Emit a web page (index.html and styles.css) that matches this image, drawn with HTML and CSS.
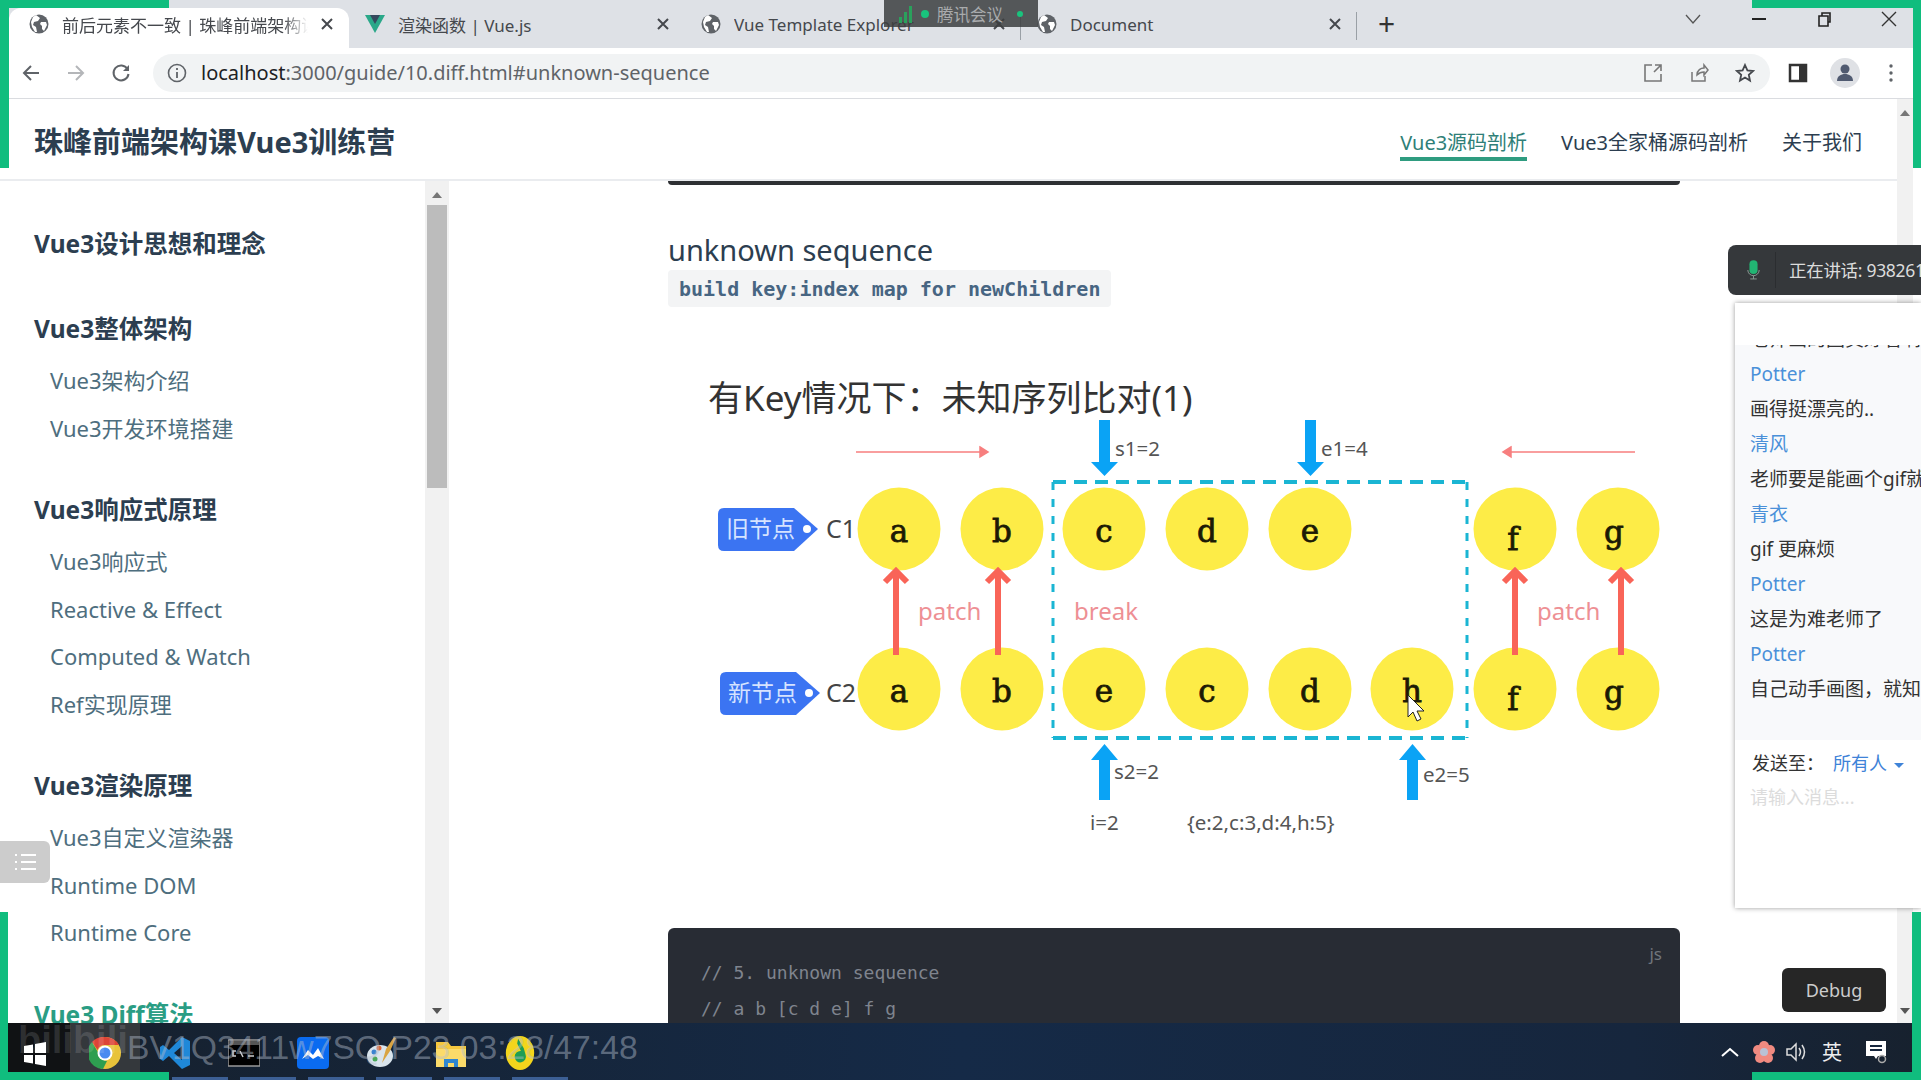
FILE: index.html
```html
<!DOCTYPE html>
<html lang="zh-CN">
<head>
    <meta charset="UTF-8">
    <meta name="viewport" content="width=device-width, initial-scale=1.0">
    <title>前后元素不一致 | 珠峰前端架构课</title>
    <link rel="stylesheet" href="styles.css">
</head>
<body>
    <svg class="defs" width="0" height="0">
        <symbol id="globe" viewBox="0 0 20 20">
            <circle cx="10" cy="10" r="9.5" fill="#5f6368"/>
            <path d="M7 1l4 3-2 3-4 1-1 3 3 2 1 5-2 0-3-5-1-5 2-5zM12 8l5 0 1 3-3 6-2-2 0-3-2-2z" fill="#fff"/>
        </symbol>
        <symbol id="close" viewBox="0 0 14 14">
            <path d="M2 2l10 10M12 2L2 12" fill="none" stroke="#45484d" stroke-width="2"/>
        </symbol>
    </svg>

    <div class="tabbar">
        <div class="tab active">
            <svg class="favicon"><use href="#globe"/></svg>
            <span class="tab-title">前后元素不一致 | 珠峰前端架构课</span>
            <svg class="tab-close"><use href="#close"/></svg>
        </div>
        <div class="tab">
            <svg class="favicon" viewBox="0 0 20 20">
                <path d="M0 1h20L10 19z" fill="#2aa889"/>
                <path d="M5 1h10l-5 9z" fill="#35495e"/>
            </svg>
            <span class="tab-title">渲染函数 | Vue.js</span>
            <svg class="tab-close"><use href="#close"/></svg>
        </div>
        <div class="tab">
            <svg class="favicon"><use href="#globe"/></svg>
            <span class="tab-title">Vue Template Explorer</span>
            <svg class="tab-close"><use href="#close"/></svg>
        </div>
        <div class="tab">
            <svg class="favicon"><use href="#globe"/></svg>
            <span class="tab-title">Document</span>
            <svg class="tab-close"><use href="#close"/></svg>
        </div>
        <span class="newtab">+</span>
        <div class="winbtns">
            <svg class="chevron" viewBox="0 0 16 10"><path d="M1 1l7 8 7-8" fill="none" stroke="#555" stroke-width="1.3"/></svg>
            <svg class="winbtn" viewBox="0 0 16 16"><path d="M1 8h14" stroke="#222" stroke-width="2"/></svg>
            <svg class="winbtn" viewBox="0 0 16 16"><path d="M3 5h9v10H3zM6 5V2h8v9h-2" fill="none" stroke="#222" stroke-width="1.6"/></svg>
            <svg class="winbtn" viewBox="0 0 16 16"><path d="M1 1l14 14M15 1L1 15" stroke="#333" stroke-width="1.4"/></svg>
        </div>
    </div>

    <div class="toolbar">
        <svg class="navicon" viewBox="0 0 20 20"><path d="M18 10H3M10 3l-7 7 7 7" fill="none" stroke="#5f6368" stroke-width="2"/></svg>
        <svg class="navicon" viewBox="0 0 20 20"><path d="M2 10h15M10 3l7 7-7 7" fill="none" stroke="#b4b6b9" stroke-width="2"/></svg>
        <svg class="navicon" viewBox="0 0 20 20"><path d="M16.5 6A7.5 7.5 0 1 0 17.5 11" fill="none" stroke="#5f6368" stroke-width="2"/><path d="M18 2v6h-6z" fill="#5f6368"/></svg>
        <div class="omnibox">
            <svg class="info" viewBox="0 0 20 20"><circle cx="10" cy="10" r="8.5" fill="none" stroke="#5f6368" stroke-width="1.6"/><path d="M10 9v6M10 5v2" stroke="#5f6368" stroke-width="1.8"/></svg>
            <span class="url"><b>localhost</b>:3000/guide/10.diff.html#unknown-sequence</span>
            <svg class="omni-icon" viewBox="0 0 20 20"><path d="M9 2H2v16h16v-7M11 9l7-7M12 2h6v6" fill="none" stroke="#777" stroke-width="1.6"/></svg>
            <svg class="omni-icon" viewBox="0 0 20 20"><path d="M3 9v9h13v-5M8 12c0-5 4-7 7-7V2l4 5-4 5V9c-3 0-5 1-7 3z" fill="none" stroke="#777" stroke-width="1.5"/></svg>
            <svg class="omni-icon" viewBox="0 0 20 20"><path d="M10 2l2.4 5.4 5.6.6-4.200 3.800 1.200 5.800-5-3-5 3 1.200-5.800L2 8l5.600-.6z" fill="none" stroke="#45484d" stroke-width="1.8"/></svg>
        </div>
        <svg class="panel-icon" viewBox="0 0 20 20"><path d="M2 2h16v16H2z" fill="none" stroke="#333" stroke-width="2.500"/><path d="M11 2h7v16h-7z" fill="#333"/></svg>
        <svg class="avatar" viewBox="0 0 30 30"><circle cx="15" cy="15" r="15" fill="#dfe1e5"/><circle cx="15" cy="11" r="4.500" fill="#505a70"/><path d="M7 23c0-5 4-7 8-7s8 2 8 7z" fill="#505a70"/></svg>
        <svg class="dots" viewBox="0 0 6 20"><circle cx="3" cy="3" r="1.700" fill="#5f6368"/><circle cx="3" cy="10" r="1.700" fill="#5f6368"/><circle cx="3" cy="17" r="1.700" fill="#5f6368"/></svg>
    </div>

    <div class="site">
        <div class="site-body">
            <header class="site-head">
                <div class="site-title">珠峰前端架构课Vue3训练营</div>
                <nav class="site-nav">
                    <a class="current">Vue3源码剖析</a>
                    <a>Vue3全家桶源码剖析</a>
                    <a>关于我们</a>
                </nav>
            </header>

            <div class="site-main">
                <aside class="sidebar">
                    <div class="sidebar-list">
                        <section class="group lone"><h3>Vue3设计思想和理念</h3></section>
                        <section class="group">
                            <h3>Vue3整体架构</h3>
                            <a>Vue3架构介绍</a>
                            <a>Vue3开发环境搭建</a>
                        </section>
                        <section class="group">
                            <h3>Vue3响应式原理</h3>
                            <a>Vue3响应式</a>
                            <a>Reactive &amp; Effect</a>
                            <a>Computed &amp; Watch</a>
                            <a>Ref实现原理</a>
                        </section>
                        <section class="group">
                            <h3>Vue3渲染原理</h3>
                            <a>Vue3自定义渲染器</a>
                            <a>Runtime DOM</a>
                            <a>Runtime Core</a>
                        </section>
                        <section class="group"><h3 class="active">Vue3 Diff算法</h3></section>
                    </div>
                    <div class="scrollbar side-scroll">
                        <span class="arrow-up"></span>
                        <span class="thumb"></span>
                        <span class="arrow-down"></span>
                    </div>
                </aside>

                <main class="content">
                    <div class="code-end"></div>
                    <h2>unknown sequence</h2>
                    <code class="inline-code">build key:index map for newChildren</code>

                    <svg class="diagram" viewBox="668 340 1012 588">
                        <text class="d-title" x="708" y="411">有Key情况下&#xFF1A;未知序列比对(1)</text>

                        <!-- scan direction -->
                        <path class="scan" d="M856 452H987M980 447l8 5-8 5z"/>
                        <path class="scan" d="M1635 452H1504M1511 447l-8 5 8 5z"/>

                        <!-- tags -->
                        <path class="tag" d="M724 508h70l24 21-24 22h-70q-6 0-6-6v-31q0-6 6-6z"/>
                        <circle class="tag-dot" cx="807" cy="529" r="4"/>
                        <text class="tag-text" x="726" y="537">旧节点</text>
                        <path class="tag" d="M726 672h70l24 21-24 22h-70q-6 0-6-6v-31q0-6 6-6z"/>
                        <circle class="tag-dot" cx="809" cy="693" r="4"/>
                        <text class="tag-text" x="728" y="701">新节点</text>
                        <text class="d-label big" x="826" y="538">C1</text>
                        <text class="d-label big" x="826" y="702">C2</text>

                        <!-- box -->
                        <path class="box-h" d="M1053 482H1467M1053 738H1467"/>
                        <path class="box-v" d="M1053 482V738M1467 482V738"/>

                        <!-- old row -->
                        <g class="node">
                            <circle cx="899" cy="529" r="41.500"/><text x="899" y="542">a</text>
                            <circle cx="1002" cy="529" r="41.500"/><text x="1002" y="542">b</text>
                            <circle cx="1104" cy="529" r="41.500"/><text x="1104" y="542">c</text>
                            <circle cx="1207" cy="529" r="41.500"/><text x="1207" y="542">d</text>
                            <circle cx="1310" cy="529" r="41.500"/><text x="1310" y="542">e</text>
                            <circle cx="1515" cy="529" r="41.500"/><text x="1513" y="550">f</text>
                            <circle cx="1618" cy="529" r="41.500"/><text x="1614" y="543">g</text>
                        </g>
                        <!-- new row -->
                        <g class="node">
                            <circle cx="899" cy="689" r="41.500"/><text x="899" y="702">a</text>
                            <circle cx="1002" cy="689" r="41.500"/><text x="1002" y="702">b</text>
                            <circle cx="1104" cy="689" r="41.500"/><text x="1104" y="702">e</text>
                            <circle cx="1207" cy="689" r="41.500"/><text x="1207" y="702">c</text>
                            <circle cx="1310" cy="689" r="41.500"/><text x="1310" y="702">d</text>
                            <circle cx="1412" cy="689" r="41.500"/><text x="1412" y="702">h</text>
                            <circle cx="1515" cy="689" r="41.500"/><text x="1513" y="710">f</text>
                            <circle cx="1618" cy="689" r="41.500"/><text x="1614" y="703">g</text>
                        </g>

                        <!-- patch arrows -->
                        <path class="patch-arrow" d="M896 655V572M885 582l11-11 11 11"/>
                        <path class="patch-arrow" d="M998 655V572M987 582l11-11 11 11"/>
                        <path class="patch-arrow" d="M1515 655V572M1504 582l11-11 11 11"/>
                        <path class="patch-arrow" d="M1621 655V572M1610 582l11-11 11 11"/>
                        <text class="d-red" x="918" y="620">patch</text>
                        <text class="d-red" x="1074" y="620">break</text>
                        <text class="d-red" x="1537" y="620">patch</text>

                        <!-- pointers -->
                        <path class="pointer" d="M1099 420h11v42h8l-13.500 14-13.500-14h8z"/>
                        <path class="pointer" d="M1305 420h11v42h8l-13.500 14-13.500-14h8z"/>
                        <path class="pointer" d="M1099 800h11v-40h8l-13.500-16-13.500 16h8z"/>
                        <path class="pointer" d="M1407 800h11v-40h8l-13.500-16-13.500 16h8z"/>
                        <text class="d-label" x="1115" y="456">s1=2</text>
                        <text class="d-label" x="1321" y="456">e1=4</text>
                        <text class="d-label" x="1114" y="779">s2=2</text>
                        <text class="d-label" x="1423" y="782">e2=5</text>
                        <text class="d-label" x="1090" y="830">i=2</text>
                        <text class="d-label" x="1187" y="830">{e:2,c:3,d:4,h:5}</text>

                        <!-- mouse -->
                        <path class="mouse" d="M1408 695v22l5-5 4 9 4-2-4-8h7z"/>
                    </svg>

                    <pre class="code-block"><span class="lang">js</span>// 5. unknown sequence
// a b [c d e] f g</pre>
                </main>
            </div>
        </div>

        <div class="scrollbar page-scroll">
            <span class="arrow-up"></span>
            <span class="arrow-down"></span>
        </div>
    </div>

    <footer class="taskbar">
        <span class="bili">bilibili</span>
        <span class="video-id">BV1Q3411w7SQ P23 03:28/47:48</span>
        <div class="start">
            <svg class="winlogo" viewBox="0 0 24 24"><path d="M1 4l9-1.500V11H1zM12 2l11-2v11H12zM1 13h9v8.500L1 20zM12 13h11v11l-11-2z" fill="#fff"/></svg>
        </div>
        <div class="task hovered">
            <svg class="task-icon" viewBox="0 0 32 32">
                <circle cx="16" cy="16" r="16" fill="#e8c33a"/>
                <path d="M16 0a16 16 0 0 1 14 8H16a8 8 0 0 0-7.500 5L3 5a16 16 0 0 1 13-5z" fill="#dc4437"/>
                <path d="M3 5l7 12a8 8 0 0 0 8 7l-4 8A16 16 0 0 1 3 5z" fill="#2e9e50"/>
                <circle cx="16" cy="16" r="7.500" fill="#fff"/><circle cx="16" cy="16" r="5.500" fill="#4a8bf0"/>
            </svg>
        </div>
        <div class="task">
            <svg class="task-icon" viewBox="0 0 32 32"><path d="M23 0l8 4v24l-8 4L10 19l-6 5-3-2V10l3-2 6 5zM23 9l-8 7 8 7z" fill="#1f88d8"/></svg>
        </div>
        <div class="task">
            <svg class="task-icon" viewBox="0 0 32 32"><path d="M0 3h32v26H0z" fill="#000" stroke="#999" stroke-width="1.500"/><path d="M1 4h30v4H1z" fill="#555"/><path d="M8 14H5v5h3M12 14l3 6M20 19h6" fill="none" stroke="#ccc" stroke-width="1.500"/></svg>
        </div>
        <div class="task">
            <svg class="task-icon" viewBox="0 0 32 32"><rect width="32" height="32" rx="4" fill="#0a6bf0"/><path d="M5 22l6-9 5 5 5-7 6 11-6-3-5 3-5-4z" fill="#fff"/></svg>
        </div>
        <div class="task">
            <svg class="task-icon" viewBox="0 0 32 32"><ellipse cx="14" cy="19" rx="13" ry="11" fill="#d9e4ec"/><circle cx="8" cy="15" r="2.500" fill="#3b82d0"/><circle cx="13" cy="11" r="2.500" fill="#e4663a"/><circle cx="9" cy="22" r="2.500" fill="#49a85a"/><path d="M16 26l4-14 8-12 2 1-6 13z" fill="#d9a441"/></svg>
        </div>
        <div class="task">
            <svg class="task-icon" viewBox="0 0 32 32"><path d="M1 5h12l3 4h15v21H1z" fill="#f4c73e"/><path d="M1 12h30v18H1z" fill="#fbdb6a"/><path d="M9 30v-8h14v8h-4v-4h-6v4z" fill="#2f86d1"/></svg>
        </div>
        <div class="task">
            <svg class="task-icon" viewBox="0 0 32 36"><ellipse cx="16" cy="18" rx="15" ry="18" fill="#f3d51c"/><path d="M14 3l6 10 2 7a6 6 0 1 1-5-4l-4-8z" fill="#1f9d55"/></svg>
        </div>

        <div class="tray">
            <svg class="tray-chevron" viewBox="0 0 18 10"><path d="M1 9l8-7 8 7" fill="none" stroke="#fff" stroke-width="2"/></svg>
            <svg class="tray-flower" viewBox="0 0 22 22"><g fill="#f08a80"><circle cx="11" cy="5" r="5"/><circle cx="17" cy="9" r="5"/><circle cx="15" cy="17" r="5"/><circle cx="7" cy="17" r="5"/><circle cx="5" cy="9" r="5"/></g><circle cx="11" cy="11" r="4" fill="#b9c2d6"/></svg>
            <svg class="tray-sound" viewBox="0 0 24 20"><path d="M2 7h4l5-5v16l-5-5H2z" fill="none" stroke="#ddd" stroke-width="1.500"/><path d="M14 6q3 4 0 8M17 3q5 7 0 14" fill="none" stroke="#ddd" stroke-width="1.500"/></svg>
            <span class="tray-ime">英</span>
            <svg class="tray-note" viewBox="0 0 24 24"><path d="M2 1h20v15h-8l-2 3-2-3H2z" fill="#fff"/><path d="M6 6h12M6 10h12" stroke="#16263d" stroke-width="1.800"/><circle cx="18" cy="19" r="3.500" fill="none" stroke="#aaa" stroke-width="1.500"/></svg>
        </div>

        <div class="seekbar">
            <i></i><i></i><i></i><i></i><i></i><i></i>
        </div>
    </footer>

    <!-- things floating over the page -->
    <div class="meeting">
        <svg class="meeting-bars" viewBox="0 0 14 18"><path d="M1 12h3v6H1zM6 7h3v11H6zM11 1h3v17h-3z" fill="#2aa05c"/></svg>
        <i class="meeting-dot"></i>
        <span>腾讯会议</span>
        <i class="meeting-dot small"></i>
    </div>

    <button class="toc-toggle">
        <svg viewBox="0 0 24 20"><path d="M7 3h15M7 10h15M7 17h15" stroke="#fff" stroke-width="2"/><path d="M1 3h2M1 10h2M1 17h2" stroke="#fff" stroke-width="2"/></svg>
    </button>

    <div class="speaking">
        <svg class="mic" viewBox="0 0 16 24"><rect x="3" y="0" width="10" height="17" rx="5" fill="#22b573"/><path d="M1 12a7 7 0 0 0 14 0M8 19v4M4 23h8" fill="none" stroke="#8a9a94" stroke-width="1.200"/></svg>
        <span class="speaking-text">正在讲话: 938261</span>
    </div>

    <div class="chat">
        <div class="chat-top"></div>
        <div class="chat-list">
            <div class="msg cut">老师画的图真好看啊</div>
            <div class="who">Potter</div>
            <div class="msg">画得挺漂亮的..</div>
            <div class="who">清风</div>
            <div class="msg">老师要是能画个gif就好了</div>
            <div class="who">青衣</div>
            <div class="msg">gif 更麻烦</div>
            <div class="who">Potter</div>
            <div class="msg">这是为难老师了</div>
            <div class="who">Potter</div>
            <div class="msg">自己动手画图&#xFF0C;就知道了</div>
        </div>
        <div class="chat-send">
            <div class="send-to"><span>发送至&#xFF1A;</span><a>所有人 <i class="caret"></i></a></div>
            <div class="placeholder">请输入消息...</div>
        </div>
    </div>

    <button class="debug">Debug</button>

    <div class="corner tl"></div>
    <div class="corner tr"></div>
    <div class="corner bl"></div>
    <div class="corner br"></div>
</body>
</html>
```
FILE: styles.css
```css
* {
  box-sizing: border-box;
}

body {
  margin: 0;
  width: 1921px;
  height: 1080px;
  overflow: hidden;
  display: flex;
  flex-direction: column;
  font-family: "Noto Sans", "Noto Sans CJK SC", sans-serif;
  color: #2c3e50;
  background: #fff;
}

.defs {
  position: absolute;
}

/* browser chrome */
.tabbar {
  height: 48px;
  flex: none;
  display: flex;
  align-items: flex-end;
  background: #dee1e6;
  padding-left: 13px;
  color: #45484d;
}

.tab {
  position: relative;
  width: 336px;
  height: 40px;
  display: flex;
  align-items: center;
  padding: 0 15px 8px 16px;
  font-size: 17px;
}

.tab::after {
  content: "";
  position: absolute;
  right: 0;
  top: 4px;
  height: 28px;
  width: 1px;
  background: #9aa0a6;
}

.tab.active {
  width: 340px;
  margin-left: -4px;
  padding-left: 20px;
  background: #fff;
  border-radius: 12px 12px 0 0;
}

.tab.active::after {
  display: none;
}

.tab:nth-child(2)::after {
  display: none;
}

.favicon {
  width: 20px;
  height: 20px;
  flex: none;
}

.tab-title {
  flex: 1;
  margin-left: 13px;
  white-space: nowrap;
  overflow: hidden;
}

.tab.active .tab-title {
  -webkit-mask-image: linear-gradient(90deg, #000 90%, transparent);
  mask-image: linear-gradient(90deg, #000 90%, transparent);
}

.tab-close {
  width: 14px;
  height: 14px;
  flex: none;
  margin-left: 12px;
}

.newtab {
  margin: 0 0 6px 21px;
  font-size: 30px;
  line-height: 36px;
  color: #333;
}

.winbtns {
  margin-left: auto;
  display: flex;
  align-items: center;
  height: 48px;
  padding: 0 24px 10px 0;
}

.chevron {
  width: 16px;
  height: 10px;
  margin-right: 50px;
}

.winbtn {
  width: 16px;
  height: 16px;
  margin-left: 49px;
}

.chevron + .winbtn {
  margin-left: 0;
}

.toolbar {
  height: 51px;
  flex: none;
  display: flex;
  align-items: center;
  padding: 0 22px 0 21px;
  background: #fff;
  border-bottom: 1px solid #dadce0;
}

.navicon {
  width: 20px;
  height: 20px;
  margin-right: 25px;
}

.navicon:nth-child(3) {
  margin-right: 22px;
}

.omnibox {
  width: 1617px;
  height: 38px;
  display: flex;
  align-items: center;
  padding: 0 15px;
  border-radius: 19px;
  background: #f1f3f4;
}

.info {
  width: 20px;
  height: 20px;
  margin-left: -1px;
}

.url {
  flex: 1;
  margin: -2px 0 0 14px;
  font-size: 20px;
  color: #5f6368;
  white-space: nowrap;
}

.url b {
  font-weight: 400;
  color: #202124;
}

.omni-icon {
  width: 20px;
  height: 20px;
  margin-left: 26px;
}

.panel-icon {
  width: 20px;
  height: 20px;
  margin-left: 18px;
}

.avatar {
  width: 30px;
  height: 30px;
  margin-left: 22px;
}

.dots {
  width: 6px;
  height: 20px;
  margin-left: 28px;
}

/* the docs site */
.site {
  height: 924px;
  flex: none;
  display: flex;
}

.site-body {
  flex: 1;
  min-width: 0;
  display: flex;
  flex-direction: column;
}

.site-head {
  height: 82px;
  flex: none;
  display: flex;
  align-items: center;
  justify-content: space-between;
  padding: 2px 35px 0 34px;
  border-bottom: 2px solid #eaecef;
}

.site-title {
  font-size: 29px;
  font-weight: 700;
}

.site-nav {
  display: flex;
  gap: 34px;
  margin-top: 3px;
  font-size: 20px;
}

.site-nav a {
  padding: 4px 0 1px;
  border-bottom: 4px solid transparent;
  color: #2c3e50;
}

.site-nav a.current {
  color: #2f7f78;
  border-bottom-color: #2f9c80;
}

.site-main {
  flex: 1;
  min-height: 0;
  display: flex;
}

.sidebar {
  width: 449px;
  flex: none;
  display: flex;
  overflow: hidden;
}

.sidebar-list {
  flex: 1;
  padding: 46px 0 0 34px;
}

.group {
  margin-bottom: 41px;
}

.group.lone {
  margin-bottom: 51px;
}

.group h3 {
  margin: 0 0 11px;
  font-size: 24.5px;
  line-height: 34px;
  font-weight: 700;
}

.group h3.active {
  color: #2a9d84;
}

.group a {
  display: block;
  height: 47.5px;
  line-height: 47.5px;
  padding-left: 16px;
  font-size: 22px;
  color: #4e6e7e;
}

.scrollbar {
  position: relative;
  flex: none;
  background: #f1f1f1;
}

.side-scroll {
  width: 24px;
}

.page-scroll {
  width: 16px;
  margin-right: 8px;
}

.thumb {
  position: absolute;
  top: 24px;
  left: 2px;
  right: 2px;
  height: 283px;
  background: #bcbcbc;
}

.arrow-up,
.arrow-down {
  position: absolute;
  left: 50%;
  margin-left: -5px;
  border: 5px solid transparent;
}

.arrow-up {
  top: 6px;
  border-bottom: 6px solid #777;
}

.arrow-down {
  bottom: 4px;
  border-top: 6px solid #555;
}

.content {
  flex: 1;
  min-width: 0;
  overflow: hidden;
  padding-left: 219px;
}

.code-end {
  width: 1012px;
  height: 4px;
  background: #2e3033;
  border-radius: 0 0 6px 6px;
}

.content h2 {
  margin: 46px 0 2px;
  font-size: 29px;
  line-height: 38px;
  font-weight: 400;
  color: #2c3e50;
}

.inline-code {
  display: inline-block;
  vertical-align: top;
  height: 37px;
  margin-top: -1px;
  padding: 0 11px;
  border-radius: 4px;
  background: #f3f4f5;
  font-family: "DejaVu Sans Mono", monospace;
  font-size: 20px;
  line-height: 38px;
  font-weight: 700;
  color: #476582;
}

.diagram {
  display: block;
  width: 1012px;
  height: 588px;
  margin-top: 33px;
}

.d-title {
  font-size: 35px;
  fill: #333;
}

.scan {
  fill: #f77f7f;
  stroke: #f77f7f;
  stroke-width: 1.5;
}

.tag {
  fill: #3b74f2;
}

.tag-dot {
  fill: #fff;
}

.tag-text {
  font-size: 23px;
  fill: #d6e3ff;
}

.d-label {
  font-size: 20.5px;
  fill: #555;
}

.d-label.big {
  font-size: 25px;
  fill: #444;
}

.box-h {
  fill: none;
  stroke: #1ab5d3;
  stroke-width: 4;
  stroke-dasharray: 13 8;
}

.box-v {
  fill: none;
  stroke: #1ab5d3;
  stroke-width: 3;
  stroke-dasharray: 8 9;
}

.node circle {
  fill: #fdec47;
}

.node text {
  font-family: "DejaVu Serif", serif;
  font-size: 31px;
  text-anchor: middle;
  fill: #1c1a05;
  stroke: #1c1a05;
  stroke-width: 0.8;
}

.patch-arrow {
  fill: none;
  stroke: #f96458;
  stroke-width: 6;
}

.d-red {
  font-size: 24px;
  fill: #ee8f94;
}

.pointer {
  fill: #0aa3f5;
}

.mouse {
  fill: #fff;
  stroke: #222;
  stroke-width: 1;
}

.code-block {
  position: relative;
  width: 1012px;
  height: 120px;
  margin: 0;
  padding: 27px 33px;
  border-radius: 6px;
  background: #282c34;
  font-family: "DejaVu Sans Mono", monospace;
  font-size: 18px;
  line-height: 36px;
  color: #7f848e;
}

.lang {
  position: absolute;
  top: 8px;
  right: 18px;
  font-size: 17px;
  font-family: "Noto Sans", sans-serif;
  color: #70757c;
}

/* windows taskbar */
.taskbar {
  position: relative;
  height: 57px;
  flex: none;
  display: flex;
  align-items: flex-start;
  padding-left: 8px;
  background: linear-gradient(90deg, #16202c, #152a47 50%, #16263d 85%, #17212e);
  overflow: hidden;
}

.start {
  width: 62px;
  height: 49px;
  display: flex;
  align-items: center;
  justify-content: center;
  padding-right: 8px;
  background: #101214;
}

.winlogo {
  width: 24px;
  height: 24px;
  margin-top: 13px;
}

.task {
  width: 69px;
  height: 49px;
  display: flex;
  align-items: center;
  justify-content: center;
  padding-top: 10px;
}

.task.hovered {
  width: 70px;
  background: #34383c;
}

.task-icon {
  width: 32px;
  height: 34px;
}

.bili {
  position: absolute;
  left: 18px;
  top: -4px;
  z-index: 1;
  font-family: "Liberation Sans", sans-serif;
  font-size: 38px;
  font-weight: 700;
  color: rgba(255, 255, 255, 0.13);
}

.video-id {
  position: absolute;
  left: 127px;
  top: 2px;
  z-index: 1;
  font-family: "Liberation Sans", sans-serif;
  font-size: 33.7px;
  line-height: 44px;
  color: rgba(180, 190, 205, 0.45);
  white-space: nowrap;
}

.tray {
  position: absolute;
  right: 33px;
  top: 0;
  height: 57px;
  display: flex;
  align-items: center;
}

.tray-chevron {
  width: 18px;
  height: 10px;
}

.tray-flower {
  width: 22px;
  height: 22px;
  margin-left: 14px;
}

.tray-sound {
  width: 24px;
  height: 20px;
  margin-left: 10px;
}

.tray-ime {
  margin-left: 13px;
  font-size: 20px;
  color: #eee;
}

.tray-note {
  width: 24px;
  height: 24px;
  margin-left: 22px;
}

.seekbar {
  position: absolute;
  left: 172px;
  bottom: 0;
  display: flex;
}

.seekbar i {
  width: 56px;
  height: 3px;
  margin-right: 12px;
  background: #3c5f94;
}

/* overlays */
.meeting {
  position: absolute;
  left: 884px;
  top: 0;
  width: 154px;
  height: 27px;
  display: flex;
  align-items: center;
  padding-left: 14px;
  background: rgba(60, 62, 64, 0.85);
  color: #a9abad;
  font-size: 16.5px;
}

.meeting-bars {
  width: 14px;
  height: 18px;
}

.meeting-dot {
  width: 8px;
  height: 8px;
  margin: 0 8px 0 9px;
  border-radius: 50%;
  background: #19c37d;
}

.meeting-dot.small {
  width: 6px;
  height: 6px;
  margin: 0 0 0 14px;
}

.toc-toggle {
  position: absolute;
  left: 0;
  top: 841px;
  width: 50px;
  height: 42px;
  padding: 0 12px 0 14px;
  border: 0;
  border-radius: 0 6px 6px 0;
  background: #ccc;
}

.toc-toggle svg {
  display: block;
  width: 24px;
  height: 20px;
}

.speaking {
  position: absolute;
  left: 1728px;
  top: 245px;
  width: 193px;
  height: 50px;
  display: flex;
  align-items: center;
  padding-left: 19px;
  border-radius: 8px 0 0 8px;
  background: #35383b;
  overflow: hidden;
}

.mic {
  width: 13px;
  height: 20px;
  flex: none;
}

.speaking-text {
  margin-left: 15px;
  padding-left: 13px;
  line-height: 36px;
  border-left: 1px solid #2b2d30;
  font-size: 17.5px;
  letter-spacing: -0.3px;
  color: #dcdcdc;
  white-space: nowrap;
}

.chat {
  position: absolute;
  left: 1735px;
  top: 303px;
  width: 186px;
  height: 605px;
  display: flex;
  flex-direction: column;
  background: #fff;
  box-shadow: 0 0 5px rgba(0, 0, 0, 0.4);
  overflow: hidden;
  font-size: 19px;
}

.chat-top {
  height: 42px;
  flex: none;
}

.chat-list {
  height: 395px;
  flex: none;
  padding: 11px 0 0 15px;
  background: #f8f9fb;
  white-space: nowrap;
  overflow: hidden;
}

.who,
.msg {
  height: 35px;
  line-height: 35px;
}

.who {
  color: #4a90d9;
}

.msg {
  color: #333;
}

/* last line of the scrolled-away message, only its bottom edge shows */
.msg.cut {
  margin-top: -34.5px;
}

.chat-send {
  padding: 9px 0 0 17px;
}

.send-to {
  display: flex;
  gap: 9px;
  height: 28px;
  line-height: 28px;
  font-size: 18px;
  color: #333;
}

.send-to a {
  color: #3f83d8;
}

.caret {
  display: inline-block;
  margin-left: 2px;
  vertical-align: middle;
  border: 5px solid transparent;
  border-top: 5px solid #3f83d8;
  border-bottom: 0;
}

.placeholder {
  margin: 6px 0 0 -2px;
  font-size: 18px;
  color: #dcdcdc;
}

.debug {
  position: absolute;
  left: 1782px;
  top: 968px;
  width: 104px;
  height: 44px;
  border: 0;
  border-radius: 6px;
  background: #262626;
  color: #ccc;
  font-family: inherit;
  font-size: 18px;
}

/* green recording frame */
.corner {
  position: absolute;
  width: 169px;
  height: 168px;
  border: 0 solid #10bd7e;
}

.corner.tl {
  left: 0;
  top: 0;
  border-width: 8px 0 0 9px;
}

.corner.tr {
  right: 0;
  top: 0;
  border-width: 8px 8px 0 0;
}

.corner.bl {
  left: 0;
  bottom: 0;
  border-width: 0 0 8px 8px;
}

.corner.br {
  right: 0;
  bottom: 0;
  border-width: 0 9px 8px 0;
}
```
